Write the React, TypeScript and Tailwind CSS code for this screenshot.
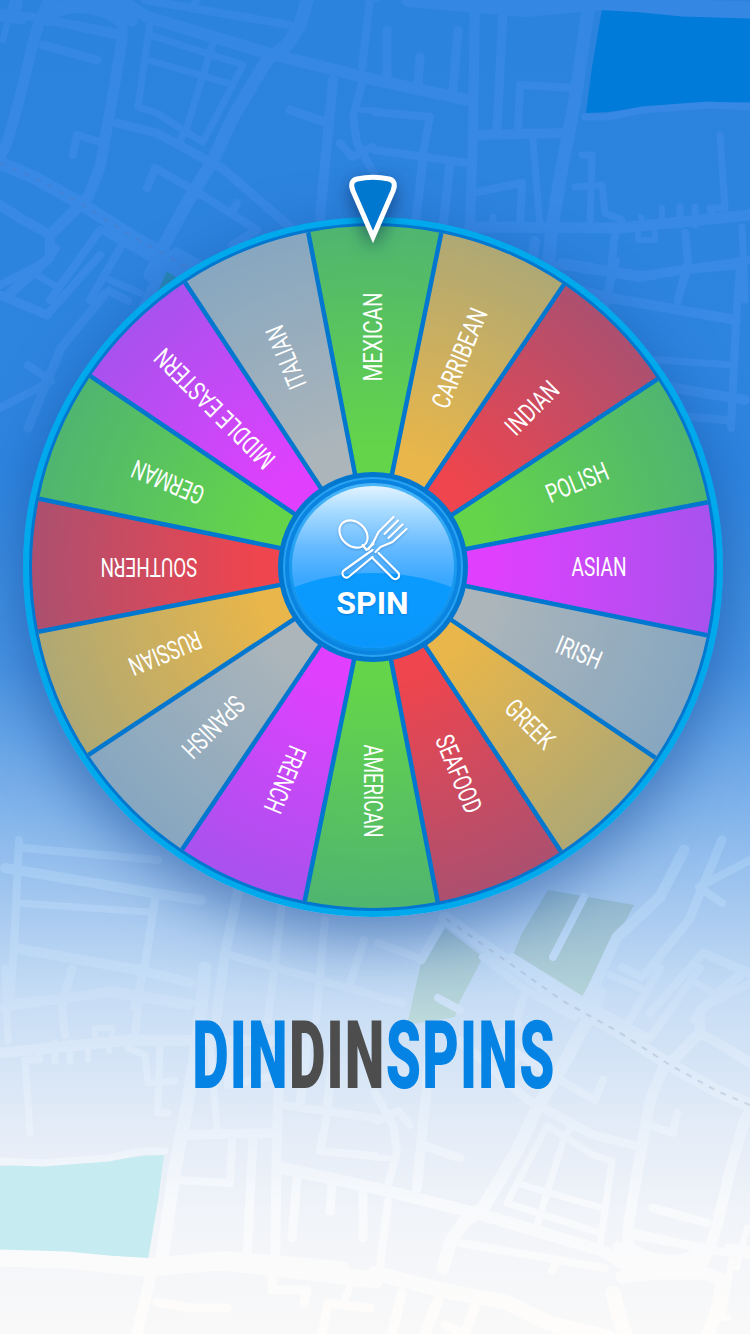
import React from 'react';

const FONT = "font-['Roboto','Liberation_Sans',sans-serif]";

// map is point symmetric around (375,634), the same roads get drawn twice
const roads: [string, number][] = [
  ['M0 13L33 17L113 32', 8],
  ['M50 0L40 20L33 43L20 97L7 143L0 157', 11],
  ['M48 20Q60 5 85 8Q115 12 122 25L122 40L112 100L100 167L88 197L72 213L50 235', 11],
  ['M0 205L20 218L50 235L50 257L33 273L10 293', 10],
  ['M0 163L33 177L80 203L133 237L187 267L305 350', 13],
  ['M43 45L97 60', 9],
  ['M125 3L147 17L267 53L375 80L468 100', 12],
  ['M145 0L290 25', 8],
  ['M193 7L198 -3', 8],
  ['M307 0L300 25L287 45L267 60L233 117L213 160L187 203L163 247L150 275', 13],
  ['M150 23L138 107L157 113L183 130L203 142L243 65L150 35', 7],
  ['M148 60L227 83', 7],
  ['M213 43L187 127L180 140', 7],
  ['M117 123L157 133L210 162L222 168L290 227', 9],
  ['M73 155L77 135L103 143', 8],
  ['M147 188L155 168L197 192L257 230L232 245', 8],
  ['M232 212L237 203', 8],
  ['M100 230L50 300', 8],
  ['M123 243L90 300', 8],
  ['M33 273L57 287', 7],
  ['M110 280L140 293', 7],
  ['M13 0L3 40', 6],
  ['M333 80L320 217', 10],
  ['M290 110L325 122', 9],
  ['M370 0L362 67', 8],
  ['M362 83L353 117L357 143L375 175', 8],
  ['M340 143L352 157L372 147', 8],
  ['M362 110L375 110', 6],
  ['M387 30L387 80', 9],
  ['M420 57L418 83', 9],
  ['M458 30L453 90', 9],
  ['M475 0L473 133L470 227', 10],
  ['M503 10L497 130', 9],
  ['M588 10L575 100L562 167L552 227L545 300', 13],
  ['M408 0L525 10L600 3L750 11', 14],
  ['M585 117L608 117L642 110L708 105L750 107', 7],
  ['M518 130L520 85L575 88', 8],
  ['M477 135L568 133', 10],
  ['M533 140L540 227', 7],
  ['M477 192L522 183L520 227', 8],
  ['M493 217L493 227', 7],
  ['M375 112L430 117L423 153', 8],
  ['M375 150L468 163', 8],
  ['M423 160L415 227', 9],
  ['M450 163L443 227', 9],
  ['M470 227L620 228L750 215', 11],
  ['M582 155L592 155L590 227', 7],
  ['M575 187L602 185L605 213L622 220L620 228', 7],
  ['M720 135L725 208L710 208L713 220', 7],
  ['M641 217L644 228', 6],
  ['M662 208L662 225', 6],
  ['M680 207L680 225', 7],
  ['M695 207L695 225', 7],
  ['M638 233L638 240L655 240L655 233', 6],
  ['M615 233L608 300', 8],
  ['M685 233L688 260L678 300', 8],
  ['M562 262L608 270L642 275L750 260', 8],
  ['M742 227L745 300', 7],
  // the part that is only seen below the wheel and beside it
  ['M19 840L14 947L10 1000', 8],
  ['M24 848L158 860', 8],
  ['M5 868L153 893L201 900', 10],
  ['M17 903L148 912', 7],
  ['M14 948L139 970L191 983', 10],
  ['M155 900L144 970L134 1007', 8],
  ['M72 970L62 1000', 8],
  ['M10 1003L72 997L110 990L191 1003', 8],
  ['M239 887L225 953L215 1027', 10],
  ['M282 903L268 1020', 8],
  ['M325 920L316 1020', 8],
  ['M364 940L349 987', 8],
  ['M230 955L402 1003', 8],
  ['M378 943L416 957', 8],
  ['M421 960L440 927', 9],
  ['M483 957L526 990L574 1017', 8],
  ['M526 990L517 1017', 8],
  ['M512 957L581 1000L646 1037', 8],
  ['M684 850L660 897L617 937L589 997', 11],
  ['M703 953L650 1013', 8],
  ['M703 953L750 973', 9],
  ['M722 840L689 920L646 973', 9],
  ['M622 967L641 977', 8],
  ['M750 860L699 887L722 903', 8],
  ['M750 983L703 1007L694 1020', 8],
  // bottom strip
  ['M0 1258L67 1260L147 1268L220 1262L277 1268L375 1280', 17],
  ['M375 1273L442 1290L508 1303L548 1323L608 1337', 15],
  ['M153 1267L137 1334', 11],
  ['M157 1302L190 1308L227 1308', 9],
  ['M272 1267L272 1290L307 1290L304 1303', 9],
  ['M322 1334L328 1303L370 1308', 9],
  ['M350 1287L343 1303', 7],
  ['M622 1277L658 1273L705 1273L722 1280L718 1307L708 1334', 13],
  ['M613 1293L622 1327L628 1340', 15],
  ['M618 1247L632 1263L705 1260', 11],
  ['M635 1233L698 1247', 8],
  ['M728 1247L750 1250', 7],
  ['M732 1260L722 1317L728 1318', 7],
  ['M402 1293L392 1334', 10],
  ['M438 1300L425 1334', 11],
  ['M475 1307L465 1334', 10],
  ['M445 1325L465 1334', 9],
  ['M584 897L553 957', 8],
  ['M438 998L460 1010', 8],
];

const dashes = 'M0 163L33 177L80 203L133 237L187 267L305 350';

const stops = [
  ['0', '#3587e4'],
  ['0.45', '#3b8de5'],
  ['0.66', '#a8cdf3'],
  ['0.78', '#d8e7f8'],
  ['0.9', '#f7f9fc'],
  ['1', '#fffdfb'],
];

function MapLayer() {
  return (
    <svg className="absolute inset-0" width="750" height="1334" viewBox="0 0 750 1334">
      <defs>
        <linearGradient id="roadTop" gradientUnits="userSpaceOnUse" x1="0" y1="0" x2="0" y2="1334">
          {stops.map(([o, c]) => (
            <stop key={o} offset={o} stopColor={c} />
          ))}
        </linearGradient>
        <linearGradient id="roadFlip" gradientUnits="userSpaceOnUse" x1="0" y1="1268" x2="0" y2="-66">
          {stops.map(([o, c]) => (
            <stop key={o} offset={o} stopColor={c} />
          ))}
        </linearGradient>
        <linearGradient id="park" gradientUnits="userSpaceOnUse" x1="0" y1="885" x2="0" y2="1030">
          <stop offset="0" stopColor="#8fb6cf" />
          <stop offset="1" stopColor="#bfdbdc" />
        </linearGradient>
      </defs>
      <path d="M602 9L658 12L750 18L750 102L692 103L642 107L608 112L586 113L592 67Z" fill="#017bd9" />
      <path
        d="M148 1259L92 1256L0 1250L0 1166L58 1165L108 1161L142 1156L164 1155L158 1201Z"
        fill="#c6ecf1"
      />
      <path d="M548 890L634 905L617 937L581 998L512 957L522 933Z" fill="url(#park)" />
      <path d="M445 928L483 957L459 1003L455 1017L407 1025L421 963Z" fill="url(#park)" />
      <path d="M168 268L185 275L157 293Z" fill="#2a8ab8" />
      <g fill="none" strokeLinecap="round" strokeLinejoin="round" stroke="url(#roadTop)">
        {roads.map(([d, w], i) => (
          <path key={i} d={d} strokeWidth={w} />
        ))}
      </g>
      <g
        transform="rotate(180 375 634)"
        fill="none"
        strokeLinecap="round"
        strokeLinejoin="round"
        stroke="url(#roadFlip)"
      >
        {roads.map(([d, w], i) => (
          <path key={i} d={d} strokeWidth={w} />
        ))}
      </g>
      <path d={dashes} fill="none" stroke="#4a7fd0" strokeWidth="2" strokeDasharray="6 7" opacity="0.7" />
      <path
        d={dashes}
        transform="rotate(180 375 634)"
        fill="none"
        stroke="#8a9cb8"
        strokeWidth="2"
        strokeDasharray="6 7"
        opacity="0.3"
      />
    </svg>
  );
}

type Slice = { name: string; fill: string; rc: number; len: number };

const slices: Slice[] = [
  { name: 'MEXICAN', fill: 'green', rc: 230, len: 89 },
  { name: 'CARRIBEAN', fill: 'yellow', rc: 226, len: 106 },
  { name: 'INDIAN', fill: 'red', rc: 225, len: 64 },
  { name: 'POLISH', fill: 'green', rc: 221, len: 65 },
  { name: 'ASIAN', fill: 'purple', rc: 226, len: 55 },
  { name: 'IRISH', fill: 'gray', rc: 223, len: 47 },
  { name: 'GREEK', fill: 'yellow', rc: 222, len: 58 },
  { name: 'SEAFOOD', fill: 'red', rc: 224, len: 82 },
  { name: 'AMERICAN', fill: 'green', rc: 224, len: 93 },
  { name: 'FRENCH', fill: 'purple', rc: 230, len: 70 },
  { name: 'SPANISH', fill: 'gray', rc: 226, len: 76 },
  { name: 'RUSSIAN', fill: 'yellow', rc: 225, len: 76 },
  { name: 'SOUTHERN', fill: 'red', rc: 224, len: 97 },
  { name: 'GERMAN', fill: 'green', rc: 222, len: 76 },
  { name: 'MIDDLE EASTERN', fill: 'purple', rc: 224, len: 158 },
  { name: 'ITALIAN', fill: 'gray', rc: 227, len: 66 },
];

const sliceColors: Record<string, [string, string]> = {
  green: ['#64d44a', '#4fb570'],
  yellow: ['#e8b64a', '#aea875'],
  red: ['#ee454e', '#ac5070'],
  purple: ['#e040fd', '#a852ee'],
  gray: ['#acb5ba', '#87a7c0'],
};

function WheelFace() {
  return (
    <svg className="absolute inset-0" width="700" height="700" viewBox="0 0 700 700">
      <defs>
        {Object.entries(sliceColors).map(([key, [inner, outer]]) => (
          <radialGradient key={key} id={key} gradientUnits="userSpaceOnUse" cx="350" cy="350" r="342">
            <stop offset="0.35" stopColor={inner} />
            <stop offset="1" stopColor={outer} />
          </radialGradient>
        ))}
      </defs>
      <circle cx="350" cy="350" r="350" fill="#00a8ec" />
      <circle cx="350" cy="350" r="344" fill="#0277cf" />
      {slices.map((s, i) => (
        <path
          key={s.name}
          transform={`rotate(${i * 22.5 + 0.3} 350 350)`}
          d="M283.5 15.6A341 341 0 0 1 416.5 15.6L350 350Z"
          fill={`url(#${s.fill})`}
        />
      ))}
      {slices.map((s, i) => (
        <path
          key={s.name}
          transform={`rotate(${i * 22.5 + 0.3} 350 350)`}
          d="M283.5 15.6L350 350"
          stroke="#0277cf"
          strokeWidth="4.5"
        />
      ))}
      {slices.map((s, i) => (
        <text
          key={s.name}
          transform={`rotate(${i * 22.5} 350 350) translate(350 ${350 - s.rc}) rotate(-90)`}
          y="9"
          textAnchor="middle"
          textLength={s.len}
          lengthAdjust="spacingAndGlyphs"
          fill="#ffffff"
          fontFamily="Roboto, 'Liberation Sans', sans-serif"
          fontSize="26"
        >
          {s.name}
        </text>
      ))}
    </svg>
  );
}

function CutleryIcon() {
  return (
    <svg
      width="80"
      height="80"
      viewBox="67.5 50 80 80"
      fill="none"
      stroke="#fff"
      strokeWidth="2.2"
      strokeLinecap="round"
      strokeLinejoin="round"
    >
      <ellipse cx="88" cy="74" rx="15.5" ry="12" transform="rotate(42 88 74)" />
      <path d="M97 85L101 90L108 84" />
      <path d="M113 93L132.5 112.5A3.8 3.8 0 0 1 127 118L107 98" />
      <path d="M103 89L108 82L113 72L128 57M110 92L115 87L127 82L141 69" />
      <path d="M119 74L132.5 60.5M123 78L137 64.5" />
      <path d="M107 90L79 110A3.8 3.8 0 0 0 83 117L107 97" />
    </svg>
  );
}

function SpinButton() {
  return (
    <div className="absolute left-1/2 top-1/2 size-[190px] -translate-x-1/2 -translate-y-1/2 rounded-full bg-[#0277cf] p-[5px]">
      <div className="size-full rounded-full bg-[#2aa2f2] p-[2px]">
        <div className="size-full rounded-full bg-[#0a84e0] p-[4px]">
          <div className="size-full rounded-full bg-[linear-gradient(180deg,#4ab6f8_0%,#1a9af0_50%,#0a8ee8_100%)] p-[3px]">
            <div className="relative flex size-full flex-col items-center overflow-hidden rounded-full bg-[linear-gradient(180deg,#e2f3ff_0%,#a6daff_16%,#66baff_38%,#3aa8ff_58%)]">
              <div className="absolute left-1/2 top-[87px] h-[140px] w-[260px] -translate-x-1/2 rounded-[50%] bg-[linear-gradient(180deg,#0a9bff_0%,#0a97fd_50%,#138ef0_100%)]" />
              <div className="relative mt-[24px] drop-shadow-[0_1px_1px_rgba(0,60,140,0.3)]">
                <CutleryIcon />
              </div>
              <span
                className={`relative mt-[-6px] text-[32px] leading-[38px] font-bold text-white [text-shadow:0_1px_2px_rgba(0,60,140,0.3)] ${FONT}`}
              >
                SPIN
              </span>
            </div>
          </div>
        </div>
      </div>
    </div>
  );
}

function Pointer() {
  return (
    <svg
      className="absolute left-[300px] top-[-47px] drop-shadow-[0_6px_9px_rgba(0,30,80,0.55)]"
      width="100"
      height="80"
      viewBox="323 170 100 80"
    >
      <path
        d="M373 237L353 191Q349 181 357 179Q373 175.5 389 179Q397 181 393 191Z"
        fill="#0078d0"
        stroke="#fff"
        strokeWidth="5"
      />
    </svg>
  );
}

export default function App() {
  return (
    <div className="relative flex h-[1334px] w-[750px] flex-col items-center overflow-hidden bg-[linear-gradient(180deg,#2c83dd_0%,#2e85df_35%,#4a95e4_50%,#9cc3ee_66%,#c7ddf5_75%,#e2ebf7_84%,#f1f4f9_91%,#f9f9f9_100%)]">
      <MapLayer />
      <div className="relative mt-[217px] ml-[-5px] size-[700px] rounded-full shadow-[0_20px_60px_rgba(10,60,140,0.5)]">
        <WheelFace />
        <SpinButton />
        <Pointer />
      </div>
      <h1
        className={`relative mt-[84px] ml-[-3px] flex origin-center scale-x-[0.6] text-[94px] leading-[110px] font-black tracking-[2px] text-[#0583e4] ${FONT}`}
      >
        DIN<span className="text-[#4d4d4d]">DIN</span>SPINS
      </h1>
    </div>
  );
}
